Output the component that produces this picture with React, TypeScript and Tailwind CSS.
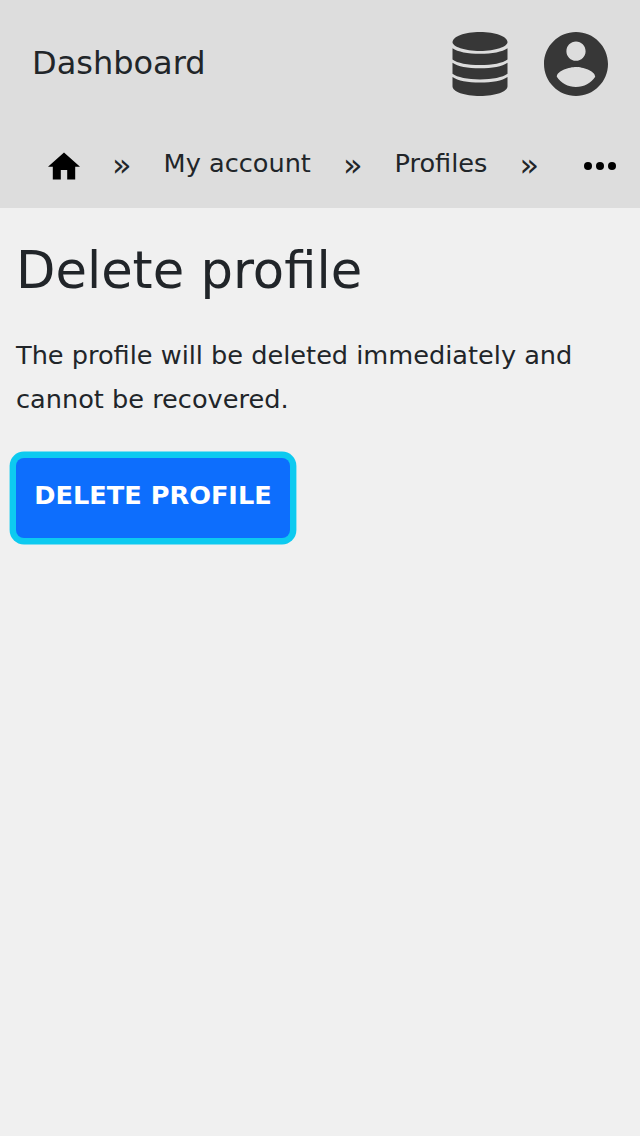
import React from "react";

function DatabaseIcon() {
  return (
    <svg viewBox="0 0 64 64" className="size-16 fill-[#373737]" aria-hidden="true">
      <path d="M4.500 10.300C4.500 4.500 16.500 0 32 0s27.500 4.500 27.500 10.300c0 4.200-12 8.800-27.500 8.800S4.500 14.500 4.500 10.300z" />
      <path d="M4.500 16.200c5.200 3.700 15.100 5.500 27.500 5.500s22.300-1.800 27.500-5.500v11.200c-4.700 3.600-15.100 5.600-27.500 5.600s-22.800-2-27.500-5.600z" />
      <path d="M4.500 30.700c5.200 3.700 15.100 5.600 27.500 5.600s22.300-1.900 27.500-5.600v11.100c-4.700 3.600-15.100 5.600-27.500 5.600s-22.800-2-27.500-5.600z" />
      <path d="M4.500 45c5.200 3.700 15.100 5.600 27.500 5.600s22.300-1.900 27.500-5.600v9.200C59.500 59.600 47.500 64 32 64S4.500 59.600 4.500 54.200z" />
    </svg>
  );
}

function AccountIcon() {
  return (
    <svg viewBox="2 2 20 20" className="size-16 fill-[#373737]" aria-hidden="true">
      <path d="M12 2C6.480 2 2 6.480 2 12s4.480 10 10 10 10-4.480 10-10S17.520 2 12 2zm0 3c1.660 0 3 1.340 3 3s-1.340 3-3 3-3-1.340-3-3 1.340-3 3-3zm0 14.200c-2.500 0-4.710-1.280-6-3.220.030-1.990 4-3.080 6-3.080 1.990 0 5.970 1.090 6 3.080-1.290 1.940-3.500 3.220-6 3.220z" />
    </svg>
  );
}

function HomeIcon() {
  return (
    <svg viewBox="2 2.75 20 17.5" className="h-7 w-8 fill-black" aria-hidden="true">
      <path d="M10 20v-6h4v6h5v-8h3L12 3 2 12h3v8z" />
    </svg>
  );
}

function MoreIcon() {
  return (
    <svg viewBox="0 0 32 8" className="h-2 w-8 fill-black" aria-hidden="true">
      <circle cx="4" cy="4" r="4" />
      <circle cx="16" cy="4" r="4" />
      <circle cx="28" cy="4" r="4" />
    </svg>
  );
}

function Separator() {
  return <span className="mt-[13px] ml-8 text-[32px] leading-[48px]" aria-hidden="true">»</span>;
}

export default function App() {
  return (
    <div className="min-h-[1136px] bg-[#f0f0f0] text-[#212529] [font-family:'DejaVu_Sans',sans-serif]">
      <header className="h-[208px] bg-[#dddddd]">
        <div className="flex h-32 items-center justify-between px-8">
          <a className="-mt-0.5 text-[32px] leading-[48px]">Dashboard</a>
          <div className="flex gap-8">
            <DatabaseIcon />
            <AccountIcon />
          </div>
        </div>
        <nav className="flex h-20 items-start pl-12 text-[25.6px] leading-[44px]">
          <a className="mt-6"><HomeIcon /></a>
          <Separator />
          <a className="mt-[13px] ml-8">My account</a>
          <Separator />
          <a className="mt-[13px] ml-8">Profiles</a>
          <Separator />
          <a className="mt-[34px] mr-6 ml-auto"><MoreIcon /></a>
        </nav>
      </header>
      <main className="px-4">
        <h1 className="pt-8 text-[51.2px] leading-[61px]">Delete profile</h1>
        <p className="mt-8 text-[25.6px] leading-[44px]">The profile will be deleted immediately and cannot be recovered.</p>
        <button className="mt-[37px] flex h-20 w-[274px] justify-center rounded-lg bg-[#0d6efd] pt-[15px] text-[25.6px] leading-[44px] font-bold text-white ring-[6.4px] ring-[#0dcaf0]">DELETE PROFILE</button>
      </main>
    </div>
  );
}
